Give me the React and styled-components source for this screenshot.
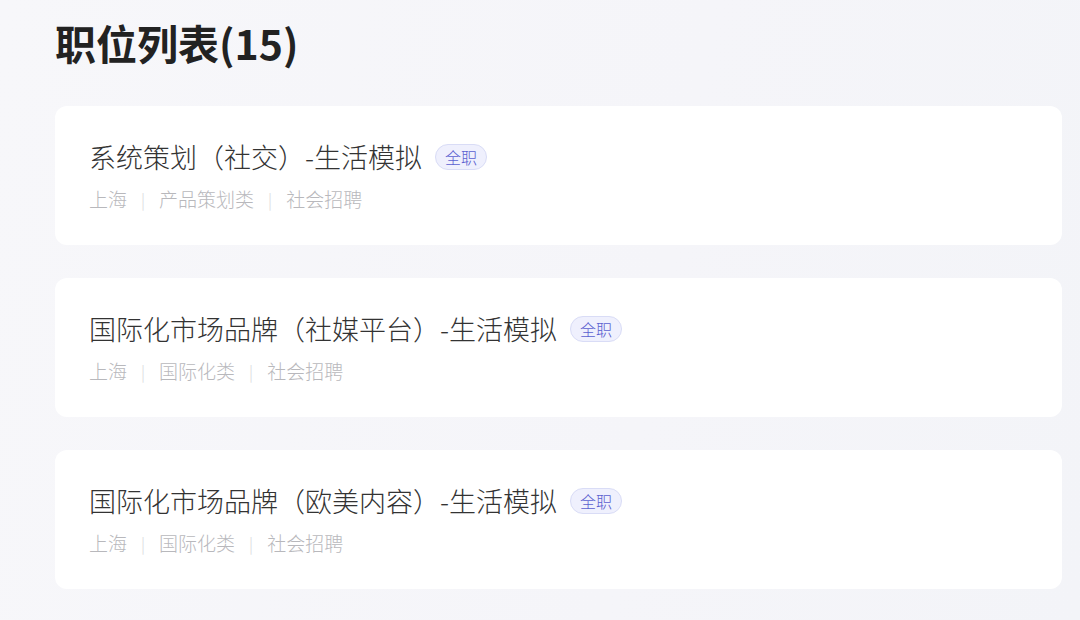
import React from 'react';
import styled, { createGlobalStyle } from 'styled-components';

const GlobalStyle = createGlobalStyle`
    html, body {
        margin: 0;
        padding: 0;
        background: #f6f6f9;
    }
    body {
        font-family: "Noto Sans CJK SC", "Noto Sans", sans-serif;
        color: #333;
    }
`;

const jobs = [
    { title: '系统策划（社交）-生活模拟', type: '全职', city: '上海', category: '产品策划类', channel: '社会招聘' },
    { title: '国际化市场品牌（社媒平台）-生活模拟', type: '全职', city: '上海', category: '国际化类', channel: '社会招聘' },
    { title: '国际化市场品牌（欧美内容）-生活模拟', type: '全职', city: '上海', category: '国际化类', channel: '社会招聘' },
];

const JobCard = ({ title, type, city, category, channel }) => (
    <Card>
        <TitleRow>
            <JobTitle>{title}</JobTitle>
            <Tag>{type}</Tag>
        </TitleRow>
        <Meta>
            <span>{city}</span>
            <Sep>|</Sep>
            <span>{category}</span>
            <Sep>|</Sep>
            <span>{channel}</span>
        </Meta>
    </Card>
);

export default function App() {
    return (
        <Page>
            <GlobalStyle />
            <Heading>职位列表(15)</Heading>
            <List>
                {jobs.map((job, i) => <JobCard key={i} {...job} />)}
            </List>
        </Page>
    );
}

const Page = styled.div`
    min-height: 620px;
    box-sizing: border-box;
    padding: 14px 18px 0 55px;
    background: linear-gradient(100deg, #f7f7fa 0%, #f5f5f9 60%, #f3f4f8 100%);
`;

const Heading = styled.h1`
    margin: 0 0 36px;
    font-size: 41px;
    line-height: 56px;
    font-weight: 700;
    color: #222;
`;

const List = styled.div`
    display: flex;
    flex-direction: column;
    gap: 33px;
`;

const Card = styled.div`
    background: #fff;
    border-radius: 12px;
    padding: 33px 34px;
    height: 139px;
    box-sizing: border-box;
`;

const TitleRow = styled.div`
    display: flex;
    align-items: center;
    gap: 13px;
`;

const JobTitle = styled.div`
    font-size: 27px;
    line-height: 36px;
    font-weight: 300;
    color: #333;
`;

const Tag = styled.span`
    display: inline-flex;
    align-items: center;
    height: 24px;
    padding: 0 9px;
    border-radius: 13px;
    background: #eff0fd;
    border: 1px solid #d9dcf6;
    color: #5b5fd0;
    font-size: 16px;
    font-weight: 300;
`;

const Meta = styled.div`
    display: flex;
    align-items: center;
    margin-top: 11px;
    font-size: 19px;
    line-height: 26px;
    font-weight: 300;
    color: #b8b8bc;
`;

const Sep = styled.span`
    margin: 0 14px;
    color: #d6d6da;
    font-size: 16px;
`;
